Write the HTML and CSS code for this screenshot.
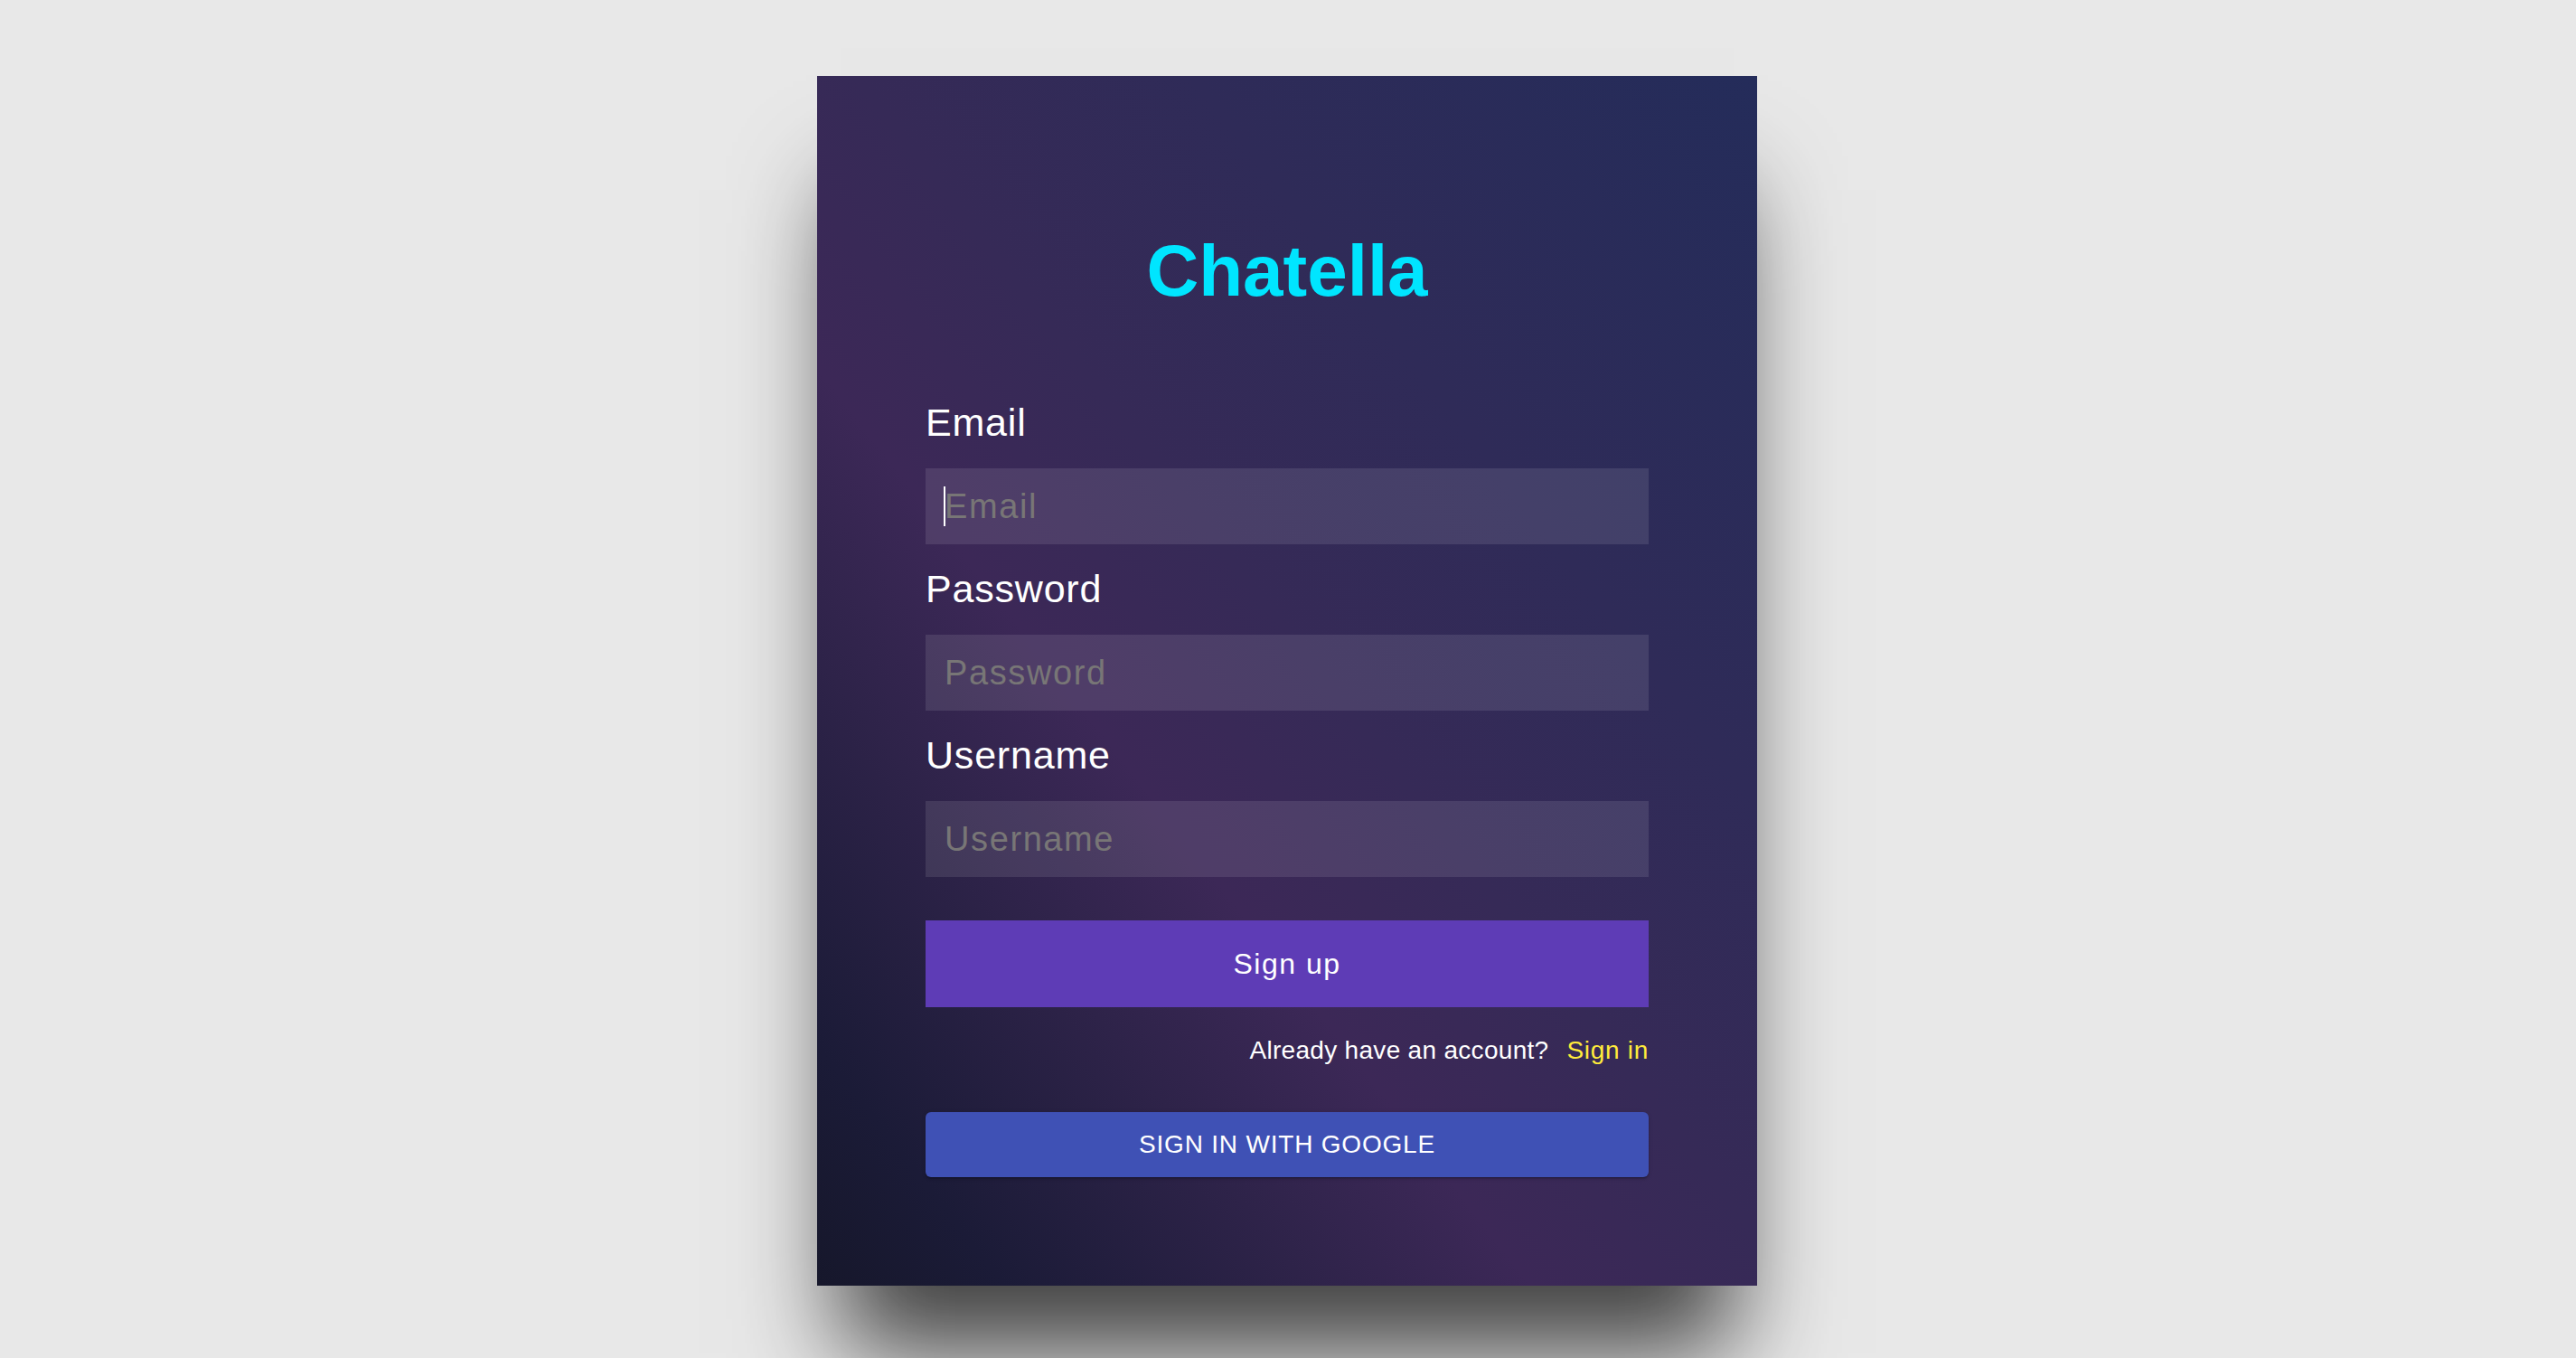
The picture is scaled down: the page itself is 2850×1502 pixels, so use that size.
FILE: index.html
```html
<!DOCTYPE html>
<html lang="en">
<head>
<meta charset="utf-8">
<title>Chatella – Sign up</title>
<link rel="stylesheet" href="styles.css">
</head>
<body>
  <main class="card">
    <h1 class="brand">Chatella</h1>
    <form class="form">
      <div class="field">
        <label class="label" for="email">Email</label>
        <div class="input-wrap">
          <input class="input" id="email" type="email" placeholder="Email">
          <span class="caret"></span>
        </div>
      </div>
      <div class="field">
        <label class="label" for="password">Password</label>
        <div class="input-wrap">
          <input class="input" id="password" type="password" placeholder="Password">
        </div>
      </div>
      <div class="field">
        <label class="label" for="username">Username</label>
        <div class="input-wrap">
          <input class="input" id="username" type="text" placeholder="Username">
        </div>
      </div>
      <button class="btn-primary" type="button">Sign up</button>
      <p class="switch"><span class="switch-text">Already have an account?</span><a class="switch-link" href="#">Sign in</a></p>
      <button class="btn-google" type="button">Sign in with Google</button>
    </form>
  </main>
</body>
</html>
```
FILE: styles.css
```css
* {
  box-sizing: border-box;
}

html, body {
  margin: 0;
  padding: 0;
}

body {
  background: #e8e8e8;
  font-family: "Liberation Sans", Arial, Helvetica, sans-serif;
  display: flex;
  justify-content: center;
  align-items: flex-start;
  padding: 84px 2px 0 0;
  height: 1502px;
  overflow: hidden;
}

.card {
  width: 1040px;
  padding: 176px 120px 120px;
  background: linear-gradient(to top right, #16172b 0%, #1b1b37 10%, #2e2349 26%, #3c2857 38%, #362a57 52%, #2f2b58 70%, #242c5a 100%);
  box-shadow: 0 100px 105px -26px rgba(0, 0, 0, 0.72);
  display: flex;
  flex-direction: column;
}

.brand {
  margin: 0;
  font-size: 80px;
  line-height: 80px;
  font-weight: 700;
  color: #00e5ff;
  text-align: center;
}

.form {
  display: flex;
  flex-direction: column;
  margin-top: 106px;
}

.field {
  display: flex;
  flex-direction: column;
  margin-bottom: 28px;
}

.field:last-of-type {
  margin-bottom: 48px;
}

.label {
  font-size: 43px;
  line-height: 43px;
  color: #ffffff;
  letter-spacing: 0.8px;
  margin-bottom: 29px;
}

.input-wrap {
  position: relative;
}

.input {
  display: block;
  width: 100%;
  height: 84px;
  border: none;
  outline: none;
  padding: 0 21px;
  background: rgba(255, 255, 255, 0.1);
  color: #ffffff;
  font-family: inherit;
  font-size: 38px;
  letter-spacing: 1.6px;
}

.input::placeholder {
  color: #787676;
  opacity: 1;
}

.caret {
  position: absolute;
  left: 20px;
  top: 20px;
  width: 2px;
  height: 44px;
  background: #ffffff;
}

.btn-primary {
  height: 96px;
  border: none;
  background: #5e3cb6;
  color: #ffffff;
  font-family: inherit;
  font-size: 32px;
  letter-spacing: 1.5px;
  padding: 0;
}

.switch {
  margin: 34px 0 0;
  display: flex;
  justify-content: flex-end;
  gap: 20px;
  font-size: 28px;
  line-height: 28px;
  letter-spacing: 0.3px;
}

.switch-text {
  color: #ffffff;
}

.switch-link {
  color: #ffeb3b;
  text-decoration: none;
  letter-spacing: 0.7px;
}

.btn-google {
  margin-top: 54px;
  height: 72px;
  border: none;
  border-radius: 6px;
  background: #3f51b5;
  color: #ffffff;
  font-family: inherit;
  font-size: 28px;
  letter-spacing: 0.8px;
  text-transform: uppercase;
  padding: 0;
  box-shadow: 0 3px 1px -2px rgba(0, 0, 0, 0.2), 0 2px 2px 0 rgba(0, 0, 0, 0.14), 0 1px 5px 0 rgba(0, 0, 0, 0.12);
}
```
